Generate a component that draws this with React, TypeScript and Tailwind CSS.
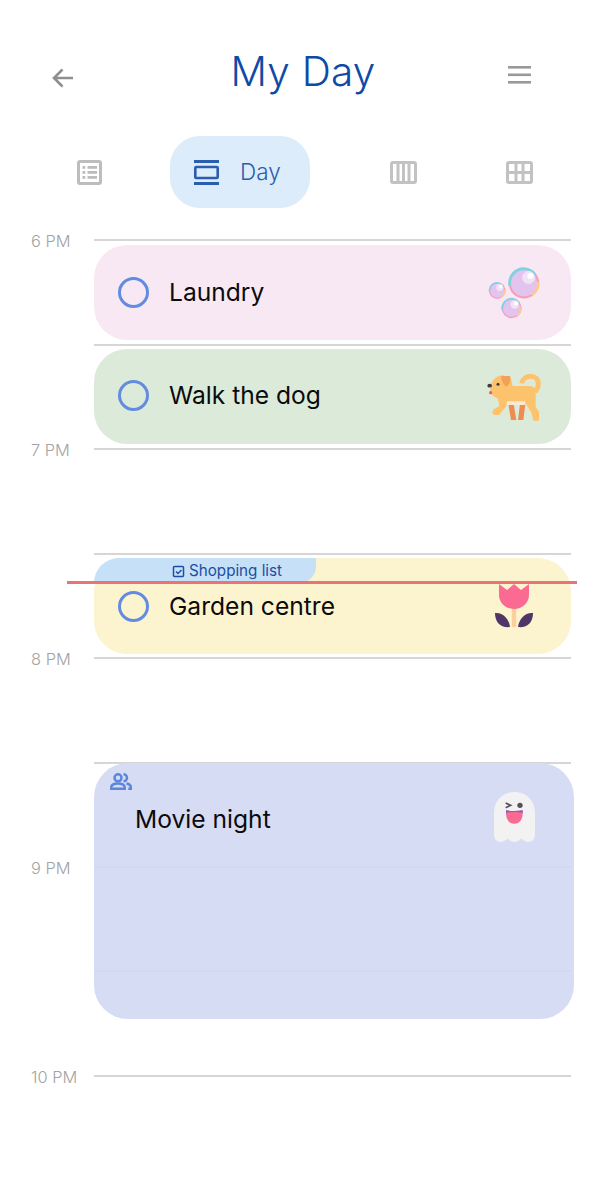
import type { ReactNode } from "react";

function Circle() {
  return <span className="block w-[31px] h-[31px] rounded-full border-[3px] border-[#638ce0] shrink-0" />;
}

function ListIcon() {
  return (
    <svg width="25" height="25" viewBox="0 0 25 25" fill="none">
      <rect x="1.500" y="1.500" width="22" height="22" rx="1.500" stroke="#bdbdbd" strokeWidth="3" />
      <g fill="#bdbdbd">
        <rect x="5.500" y="6" width="2.800" height="2.800" /><rect x="10.500" y="6" width="9.500" height="2.800" />
        <rect x="5.500" y="11" width="2.800" height="2.800" /><rect x="10.500" y="11" width="9.500" height="2.800" />
        <rect x="5.500" y="16" width="2.800" height="2.800" /><rect x="10.500" y="16" width="9.500" height="2.800" />
      </g>
    </svg>
  );
}
function DayIcon() {
  return (
    <svg width="25" height="25" viewBox="0 0 25 25" fill="none">
      <rect x="0" y="0" width="25" height="3" fill="#2a5db0" />
      <rect x="1.300" y="7" width="22.400" height="11" rx="1" stroke="#2a5db0" strokeWidth="2.600" />
      <rect x="0" y="22" width="25" height="3" fill="#2a5db0" />
    </svg>
  );
}
function WeekIcon() {
  return (
    <svg width="27" height="23" viewBox="0 0 27 23" fill="none">
      <rect x="1.500" y="1.500" width="24" height="20" rx="1.500" stroke="#c2c2c2" strokeWidth="3" />
      <g fill="#c2c2c2">
        <rect x="6.500" y="2" width="3" height="19" /><rect x="12" y="2" width="3" height="19" /><rect x="17.500" y="2" width="3" height="19" />
      </g>
    </svg>
  );
}
function MonthIcon() {
  return (
    <svg width="27" height="23" viewBox="0 0 27 23" fill="none">
      <rect x="1.500" y="1.500" width="24" height="20" rx="1.500" stroke="#c2c2c2" strokeWidth="3" />
      <g fill="#c2c2c2">
        <rect x="2" y="10" width="23" height="3" /><rect x="8.500" y="2" width="3" height="19" /><rect x="15.500" y="2" width="3" height="19" />
      </g>
    </svg>
  );
}

function Bubble({ cx, cy, r }: { cx: number; cy: number; r: number }) {
  return (
    <g>
      <circle cx={cx} cy={cy} r={r} fill="#f7a0bd" />
      <path d={`M${cx - r} ${cy + r * 0.2}A${r} ${r} 0 0 1 ${cx + r * 0.8} ${cy - r * 0.6}L${cx} ${cy}Z`} fill="#7fd3e0" />
      <path d={`M${cx + r} ${cy - r * 0.1}A${r} ${r} 0 0 1 ${cx + r * 0.55} ${cy + r * 0.83}L${cx} ${cy}Z`} fill="#fbcf80" />
      <circle cx={cx} cy={cy} r={r * 0.85} fill="#e3c4ef" />
      <circle cx={cx + r * 0.3} cy={cy - r * 0.38} r={r * 0.42} fill="#f1e3f6" />
      <circle cx={cx + r * 0.42} cy={cy - r * 0.48} r={r * 0.2} fill="#ffffff" />
    </g>
  );
}
function Bubbles() {
  return (
    <svg width="54" height="56" viewBox="0 0 54 56">
      <Bubble cx={37} cy={16.300} r={15.300} />
      <Bubble cx={10.300} cy={23.700} r={8.300} />
      <Bubble cx={24.700} cy={41.300} r={10} />
    </svg>
  );
}
function Dog() {
  return (
    <svg width="56" height="50" viewBox="51 36 168 150">
      <path d="M155 70C160 42 205 40 205 72C205 84 200 90 195 96" fill="none" stroke="#fdc36c" strokeWidth="15" />
      <path d="M115 132h16l8 48h-16zM150 132h16l-6 48h-16z" fill="#ee8d52" />
      <path d="M62 78C68 56 82 46 100 46L122 54L128 78H180C192 78 197 88 197 100V140L207 156V182H190L185 160L168 132H112L106 142L88 165H76C66 165 64 150 74 146L88 138C86 128 84 120 82 114C66 110 58 94 62 78Z" fill="#fdc36c" />
      <path d="M93 48H120C124 60 118 76 108 80C100 74 94 62 93 48Z" fill="#f4a058" />
      <rect x="110" y="124" width="56" height="11" rx="2" fill="#fbe8d5" />
      <ellipse cx="59" cy="77" rx="7" ry="5.500" fill="#3f3a4a" />
      <circle cx="84" cy="73" r="4.500" fill="#3f3a4a" />
      <circle cx="62" cy="98" r="5" fill="#ef5b6b" />
    </svg>
  );
}
function Tulip() {
  return (
    <svg width="40" height="46" viewBox="0 0 40 46">
      <rect x="17.800" y="24" width="4.400" height="20" fill="#fbd09c" />
      <path d="M5 1L13 7L20 1L27 7L35 1V12C35 20 28 26 20 26S5 20 5 12Z" fill="#fb6a92" />
      <path d="M1 30C8 29 15 35 16 44C7 45 1 40 1 30Z" fill="#4f3668" />
      <path d="M39 30C32 29 25 35 24 44C33 45 39 40 39 30Z" fill="#4f3668" />
    </svg>
  );
}
function Ghost() {
  return (
    <svg width="41" height="50" viewBox="42 35 123 150">
      <path d="M42 98C42 60 68 35 103 35S165 60 165 98V165C165 176 156 185 145 185C136 185 130 180 124 174C118 180 112 185 103 185S88 180 83 174C77 180 71 185 62 185C51 185 42 176 42 165Z" fill="#f2f2f3" />
      <path d="M77 68L92 75L77 82" fill="none" stroke="#55505a" strokeWidth="5" />
      <circle cx="120" cy="75" r="8" fill="#55505a" />
      <path d="M78 90C93 93 113 93 128 90C130 115 120 130 103 130S76 115 78 90Z" fill="#fb6a92" />
      <path d="M78 90C93 93 113 93 128 90L128 98C113 94 93 94 78 98Z" fill="#8a63b8" />
    </svg>
  );
}

function Row({ label }: { label: string }) {
  return (
    <div className="h-[104.5px] flex items-start">
      <span className="w-[94px] pl-[31px] -mt-[9px] text-[16.400px] leading-[22px] font-light text-[#a3a3a3] whitespace-nowrap">{label}</span>
      <div className="h-[2px] flex-1 mr-[42px] bg-[#d6d6d6]" />
    </div>
  );
}

function Task({ className, title, children }: { className: string; title: string; children?: ReactNode }) {
  return (
    <div className={`absolute left-[94px] w-[477px] rounded-[33px] flex items-center pl-[24px] ${className}`}>
      <Circle />
      <span className="ml-[20px] text-[24.600px] text-[#0b0b0b]">{title}</span>
      {children}
    </div>
  );
}

export default function App() {
  return (
    <div className="relative w-[613px] h-[1200px] bg-white overflow-hidden font-['Inter','Noto_Sans',sans-serif]">
      <header className="h-[136px] flex items-start justify-between pl-[52px] pr-[82px]">
        <svg className="mt-[68px]" width="22" height="20" viewBox="0 0 22 20" fill="none" stroke="#8f8f8f" strokeWidth="2.600">
          <path d="M21 10H2.500M10.500 1.500L2 10l8.500 8.500" />
        </svg>
        <h1 className="mt-[46px] ml-[24px] text-[40.500px] leading-[52px] font-light text-[#0f4ba6] tracking-[0.2px]">My Day</h1>
        <svg className="mt-[66px]" width="23" height="18" viewBox="0 0 23 18" fill="#999999">
          <rect y="0" width="23" height="2.600" /><rect y="7.500" width="23" height="2.600" /><rect y="15" width="23" height="2.600" />
        </svg>
      </header>

      <nav className="h-[72px] flex items-center">
        <div className="w-[170px] flex justify-center pl-[9px]"><ListIcon /></div>
        <div className="w-[140px] h-[72px] rounded-[30px] bg-[#ddecfa] flex items-center pl-[24px] gap-[21px]">
          <DayIcon />
          <span className="text-[22.500px] font-light text-[#2a5db0]">Day</span>
        </div>
        <div className="w-[186px] flex justify-center"><WeekIcon /></div>
        <div className="w-[46px] flex justify-center"><MonthIcon /></div>
      </nav>

      <section className="mt-[31px]">
        <Row label="6 PM" />
        <Row label="" />
        <Row label="7 PM" />
        <Row label="" />
        <Row label="8 PM" />
        <Row label="" />
        <Row label="9 PM" />
        <Row label="" />
        <Row label="10 PM" />
      </section>

      <Task className="top-[245px] h-[95px] bg-[#f8e8f3] pb-[1px]" title="Laundry" />
      <div className="absolute left-[487px] top-[267px]"><Bubbles /></div>

      <Task className="top-[349px] h-[95px] bg-[#dceada] pb-[2px]" title="Walk the dog" />
      <div className="absolute left-[487px] top-[372px]"><Dog /></div>

      <Task className="top-[558px] h-[96px] bg-[#fcf4cf]" title="Garden centre" />
      <div className="absolute left-[94px] top-[558px] w-[222px] h-[25px] bg-[#c6e0f7] rounded-tl-[33px] rounded-br-[22px] flex items-center pl-[78px] pt-[1px] gap-[4px]">
        <svg width="13" height="13" viewBox="0 0 13 13" fill="none" stroke="#1a4fa3" strokeWidth="1.500">
          <rect x="1.500" y="1.500" width="10" height="10" rx="1" />
          <path d="M4 6.500l2 2 3.500-3.500" />
        </svg>
        <span className="text-[15.200px] text-[#1a4fa3]">Shopping list</span>
      </div>
      <div className="absolute left-[494px] top-[583px]"><Tulip /></div>

      <div className="absolute left-[94px] top-[763px] w-[480px] h-[256px] rounded-[34px] bg-[#d7dcf5]">
        <svg className="absolute left-[16px] top-[10px]" width="22" height="17" viewBox="0 0 22 17" fill="none" stroke="#5b86de" strokeWidth="2.500">
          <circle cx="8" cy="4.800" r="3.500" />
          <path d="M1.300 15.700v-1.500c0-2.500 3-3.800 6.700-3.800s6.700 1.300 6.700 3.800v1.500z" />
          <path d="M13.500 1.300a3.500 3.500 0 0 1 0 7M16.500 10.500c2.700.5 4.300 1.800 4.300 3.700v1.500h-2.500" />
        </svg>
        <span className="absolute left-[41px] top-[39px] text-[24.600px] leading-[34px] text-[#0b0b0b]">Movie night</span>
        <div className="absolute left-[400px] top-[29px]"><Ghost /></div>
        <div className="absolute left-0 top-[103px] w-[477px] h-[2px] bg-[#d2d7f2]" />
        <div className="absolute left-0 top-[207px] w-[477px] h-[2px] bg-[#d2d7f2]" />
      </div>

      <div className="absolute left-[67px] top-[581px] w-[510px] h-[3px] bg-[#e87478]" />
    </div>
  );
}
